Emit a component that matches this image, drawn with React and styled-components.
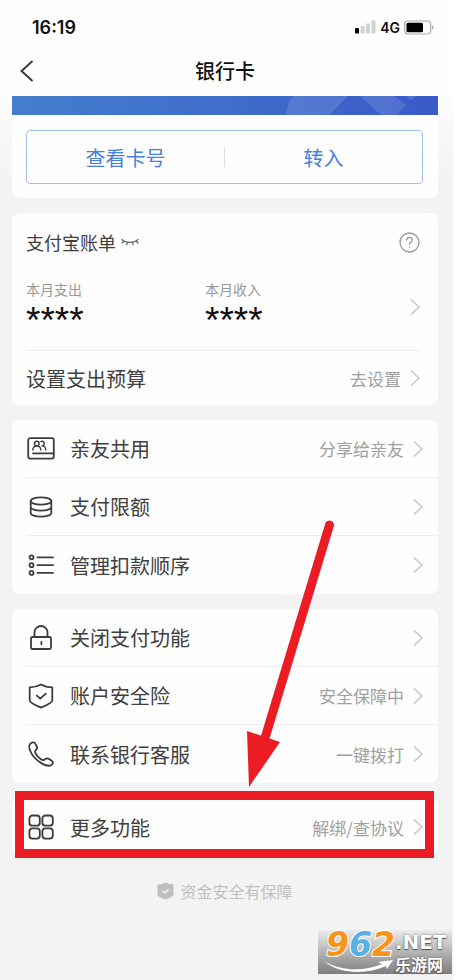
import React from 'react';
import styled, { createGlobalStyle } from 'styled-components';

const GlobalStyle = createGlobalStyle`
  * { box-sizing: border-box; }
  body {
    margin: 0;
    background: #fff;
    color: #404040;
    font-family: 'Noto Sans CJK SC', 'Noto Sans', sans-serif;
    font-weight: 400;
  }
  button {
    font: inherit;
    color: inherit;
    background: none;
    border: 0;
    padding: 0;
    margin: 0;
    text-align: left;
    cursor: pointer;
  }
  svg { display: block; }
`;

const Screen = styled.div`
  display: flex;
  flex-direction: column;
  min-height: 100vh;
  padding-right: 4px;
`;

const Header = styled.header`
  padding: 0 15px 8px 12px;
  background: #fefefe;
`;

const StatusBar = styled.div`
  display: flex;
  align-items: center;
  justify-content: space-between;
  height: 54px;
  padding: 0 4px 0 20px;
  color: #111;
  font-family: Inter, sans-serif;
`;

const Clock = styled.time`
  font-size: 18px;
  font-weight: 600;
`;

const Signals = styled.div`
  display: flex;
  align-items: center;
  gap: 4px;
  font-size: 14px;
  font-weight: 600;
`;

const NavBar = styled.nav`
  display: grid;
  grid-template-columns: 1fr auto 1fr;
  align-items: center;
  height: 34px;
`;

const BackButton = styled.button`
  justify-self: start;
  padding: 4px 8px;
`;

const Title = styled.h1`
  margin: 0;
  font-size: 20px;
  line-height: 28px;
  font-weight: 500;
  color: #111;
`;

const Content = styled.main`
  position: relative;
  flex: 1;
  display: flex;
  flex-direction: column;
  gap: 15px;
  padding: 0 15px 6px 12px;
  background: #f3f3f3 linear-gradient(#fcfcfc, #f3f3f3) top / 100% 90px no-repeat;
`;

const Card = styled.section`
  position: relative;
  background: #fefefe;
  border-radius: ${(p) => (p.$flatTop ? '0 0 8px 8px' : '8px')};
`;

const CardBanner = styled.div`
  height: 19px;
  overflow: hidden;
  display: flex;
  justify-content: flex-end;
  background: linear-gradient(90deg, #447ecd, #3f6ecb 50%, #3a5ac9);
`;

const ActionGroup = styled.div`
  display: grid;
  grid-template-columns: 1fr 1px 1fr;
  align-items: center;
  height: 54px;
  margin: 15px 15px 0 14px;
  border: 1px solid #a3c0ea;
  border-radius: 4px;
`;

const CardActions = styled.div`
  padding-bottom: 14px;
  display: flow-root;
`;

const ActionButton = styled.button`
  height: 52px;
  text-align: center;
  font-size: 20px;
  color: #4680da;
`;

const ActionDivider = styled.span`
  height: 20px;
  background: #d5dfef;
`;

const BillCard = styled(Card)`
  padding: 0 18px 0 14px;
`;

const BillHeader = styled.div`
  display: flex;
  align-items: center;
  justify-content: space-between;
  height: 58px;
`;

const BillTitle = styled.h2`
  display: flex;
  align-items: center;
  gap: 4px;
  margin: 0;
  font-size: 18px;
  font-weight: 400;
`;

const BillSummary = styled.button`
  display: grid;
  grid-template-columns: 179px 1fr auto;
  align-items: center;
  width: 100%;
  padding: 8px 0 16px;
  border-bottom: 1px solid #ededed;
`;

const Amount = styled.span`
  display: flex;
  flex-direction: column;
`;

const AmountLabel = styled.span`
  font-size: 14px;
  line-height: 20px;
  color: #999;
`;

const AmountValue = styled.span`
  height: 35px;
  padding-top: 5px;
  font-family: 'Liberation Sans', sans-serif;
  font-size: 37px;
  line-height: 34px;
  color: #111;
`;

const Row = styled.button`
  display: flex;
  align-items: center;
  width: 100%;
  height: 58px;
  padding-right: ${(p) => (p.$inset ? '0' : '15px')};
  font-size: 20px;
  border-bottom: ${(p) => (p.$last ? '0' : '1px solid #ededed')};
`;

const BudgetRow = styled(Row)`
  height: 54px;
`;

const RowList = styled.div`
  padding-left: 14px;
`;

const RowIcon = styled.span`
  width: 30px;
  margin-right: 14px;
`;

const RowLabel = styled.span`
  flex: 1;
`;

const RowNote = styled.span`
  margin-right: 9px;
  font-size: 17px;
  color: #a0a0a0;
`;

const Highlight = styled.div`
  position: absolute;
  inset: -7px 4px -2px 3px;
  border: 9px solid #ec1c24;
  pointer-events: none;
`;

const Arrow = styled.svg`
  position: absolute;
  right: 103px;
  bottom: 68px;
  pointer-events: none;
`;

const Safety = styled.p`
  display: flex;
  align-items: center;
  justify-content: center;
  gap: 6px;
  margin: 8px 0 0;
  font-size: 16px;
  line-height: 24px;
  color: #bfbfbf;
`;

const SiteBadge = styled.footer`
  display: grid;
  grid-template-columns: 69px auto;
  align-self: flex-end;
  position: relative;
  width: 134px;
  height: 44px;
  margin: auto -14px 0 0;
  padding-left: 8px;
  background: linear-gradient(#ececec, #7e7e7e);
  font-family: 'DejaVu Sans', sans-serif;
  font-weight: 700;
  color: #fff;
`;

const BadgeNumber = styled.span`
  font-size: 33px;
  line-height: 30px;
  font-style: oblique;
  color: #f7941d;
  paint-order: stroke fill;
  -webkit-text-stroke: 2px #fff;
`;

const BadgeBlue = styled.span`
  color: #56b0e6;
`;

const BadgeName = styled.span`
  display: flex;
  flex-direction: column;
  text-shadow: 0 0 2px #555, 0 1px 1px #555;
`;

const BadgeDomain = styled.span`
  font-size: 20px;
  line-height: 24px;
`;

const BadgeChinese = styled.span`
  font-family: 'Noto Sans CJK SC', sans-serif;
  font-size: 16px;
  line-height: 20px;
`;

const Swoosh = styled.svg`
  position: absolute;
  left: 6px;
  bottom: 1px;
`;

const Chevron = () => (
  <svg width="10" height="18" viewBox="0 0 10 18" fill="none" stroke="#c4c4c4" strokeWidth="1.4" aria-hidden="true">
    <path d="M1 1.5 9 9 1 16.5" />
  </svg>
);

const Icon = ({ children }) => (
  <svg width="30" height="30" viewBox="0 0 30 30" fill="none" stroke="#3c3c3c" strokeWidth="1.8" strokeLinecap="round" strokeLinejoin="round" aria-hidden="true">
    {children}
  </svg>
);

const icons = {
  family: (
    <Icon>
      <rect x="2.2" y="4.2" width="25.6" height="20.4" rx="2" />
      <path d="M7 19.3h20.5" />
      <g strokeWidth="1.4">
        <circle cx="10.8" cy="9.6" r="2.3" />
        <path d="M6.8 16c.1-2.4 1.5-4 4-4s3.9 1.6 4 4" />
        <path d="M14.9 7.6a2.3 2.3 0 1 1 1 4.3c2.4 0 3.7 1.6 3.9 4.1" />
      </g>
    </Icon>
  ),
  limit: (
    <Icon>
      <ellipse cx="15" cy="9" rx="10.3" ry="3.7" />
      <path d="M4.7 9v12c0 2 4.6 3.7 10.3 3.7s10.3-1.7 10.3-3.7V9M4.7 15c0 2 4.6 3.7 10.3 3.7s10.3-1.7 10.3-3.7" />
    </Icon>
  ),
  order: (
    <Icon>
      <circle cx="5.5" cy="7.3" r="2" />
      <circle cx="5.5" cy="15.2" r="2" />
      <circle cx="5.5" cy="22.9" r="2" />
      <path d="M11.5 7.3H27M11.5 15.2H27M11.5 22.9H27" />
    </Icon>
  ),
  lock: (
    <Icon>
      <rect x="5" y="14" width="20" height="12" rx="1.5" />
      <path d="M8.5 14V9.5a6.5 6.5 0 0 1 13 0V14M15.4 18.8v2.5" />
    </Icon>
  ),
  shield: (
    <Icon>
      <path d="M15 3.5c3.2 1.9 7 2.8 11.3 2.9v13c0 2.4-6.3 5-11.3 7.2-5-2.2-11.3-4.8-11.3-7.2v-13C8 6.3 11.8 5.4 15 3.5Z" />
      <path d="m10.8 14.7 3.4 3 5.6-5" />
    </Icon>
  ),
  phone: (
    <Icon>
      <path d="M4.2 4.9c1.2-1.4 3.3-2.2 4.4-1 1 1.1 2.2 3.4 2.5 4.8.3 1.7-2.5 2.7-2.1 4.2.8 3.1 4.9 7.2 7.9 8.2 1.6.5 2.5-2 4.3-1.7 1.5.3 3.9 1.7 5.2 2.9 1.2 1.2.3 2.8-1.2 3.8-2.3 1.3-5.7.4-9.1-1.5C10 21.3 6 16.6 4 11.3c-1-2.6-1.2-4.8.2-6.4Z" />
    </Icon>
  ),
  more: (
    <Icon>
      <rect x="3.4" y="3.5" width="10.4" height="10.2" rx="3" />
      <rect x="16.4" y="3.5" width="10.4" height="10.2" rx="3" />
      <rect x="3.4" y="16.4" width="10.4" height="10.2" rx="3" />
      <rect x="16.4" y="16.4" width="10.4" height="10.2" rx="3" />
    </Icon>
  ),
};

const sharing = [
  { icon: 'family', label: '亲友共用', note: '分享给亲友' },
  { icon: 'limit', label: '支付限额' },
  { icon: 'order', label: '管理扣款顺序' },
];

const security = [
  { icon: 'lock', label: '关闭支付功能' },
  { icon: 'shield', label: '账户安全险', note: '安全保障中' },
  { icon: 'phone', label: '联系银行客服', note: '一键拨打' },
];

const more = [{ icon: 'more', label: '更多功能', note: '解绑/查协议' }];

const Rows = ({ items }) => (
  <RowList>
    {items.map(({ icon, label, note }, i) => (
      <Row key={label} type="button" $last={i === items.length - 1}>
        <RowIcon>{icons[icon]}</RowIcon>
        <RowLabel>{label}</RowLabel>
        {note && <RowNote>{note}</RowNote>}
        <Chevron />
      </Row>
    ))}
  </RowList>
);

export default function App() {
  return (
    <Screen>
      <GlobalStyle />
      <Header>
        <StatusBar>
          <Clock>16:19</Clock>
          <Signals>
            <svg width="21" height="14" viewBox="0 0 21 14" fill="#d2d2d2" aria-hidden="true">
              <rect x="0" y="8" width="4" height="5.5" rx="1" fill="#000" />
              <rect x="5.6" y="6" width="4" height="7.5" rx="1" />
              <rect x="11" y="3.5" width="4" height="10" rx="1" />
              <rect x="16.5" y="0.5" width="4" height="13" rx="1" />
            </svg>
            <span>4G</span>
            <svg width="30" height="15" viewBox="0 0 30 15" aria-hidden="true">
              <rect x="0.7" y="1" width="26" height="13" rx="3.5" fill="none" stroke="#aaa" strokeWidth="1.2" />
              <rect x="2.5" y="2.8" width="16.5" height="9.5" rx="1.5" />
              <path d="M28 5.5c2 .6 2 3.4 0 4Z" fill="#aaa" />
            </svg>
          </Signals>
        </StatusBar>
        <NavBar>
          <BackButton type="button" aria-label="返回">
            <svg width="14" height="22" viewBox="0 0 14 22" fill="none" stroke="#333" strokeWidth="1.8" aria-hidden="true">
              <path d="M12.5 1 1.5 11l11 10" />
            </svg>
          </BackButton>
          <Title>银行卡</Title>
        </NavBar>
      </Header>

      <Content>
        <Card $flatTop>
          <CardBanner>
            <svg width="152" height="19" viewBox="0 0 152 19" fill="#fff" fillOpacity=".12" aria-hidden="true">
              <path d="M0 19C1 11 3 5 7 0h55L43 19Z" />
              <path d="M74 0h34l12 9-10 10H95ZM119 0h12l-6 4Z" />
            </svg>
          </CardBanner>
          <CardActions>
            <ActionGroup>
              <ActionButton type="button">查看卡号</ActionButton>
              <ActionDivider />
              <ActionButton type="button">转入</ActionButton>
            </ActionGroup>
          </CardActions>
        </Card>

        <BillCard>
          <BillHeader>
            <BillTitle>
              支付宝账单
              <button type="button" aria-label="显示金额">
                <svg width="20" height="10" viewBox="0 0 20 10" fill="none" stroke="#666" strokeWidth="1.2" strokeLinecap="round" aria-hidden="true">
                  <path d="M2 2.5c3.5 3.8 12.5 3.8 16 0M3.9 4.2 2 6M7.5 5.3l-.8 2.5M12.5 5.3l.8 2.5M16.1 4.2 18 6" />
                </svg>
              </button>
            </BillTitle>
            <button type="button" aria-label="帮助">
              <svg width="21" height="21" viewBox="0 0 21 21" fill="none" stroke="#999" strokeWidth="1.3" strokeLinecap="round" aria-hidden="true">
                <circle cx="10.5" cy="10.5" r="9.5" />
                <path d="M7.7 8c.1-1.7 1.2-2.6 2.8-2.6s2.8 1 2.8 2.5c0 2-2.8 2-2.8 4.3M10.5 14.9v.2" />
              </svg>
            </button>
          </BillHeader>
          <BillSummary type="button">
            <Amount>
              <AmountLabel>本月支出</AmountLabel>
              <AmountValue>****</AmountValue>
            </Amount>
            <Amount>
              <AmountLabel>本月收入</AmountLabel>
              <AmountValue>****</AmountValue>
            </Amount>
            <Chevron />
          </BillSummary>
          <BudgetRow type="button" $inset $last>
            <RowLabel>设置支出预算</RowLabel>
            <RowNote>去设置</RowNote>
            <Chevron />
          </BudgetRow>
        </BillCard>

        <Card>
          <Rows items={sharing} />
        </Card>
        <Card>
          <Rows items={security} />
        </Card>
        <Card>
          <Rows items={more} />
          <Highlight />
          <Arrow width="90" height="270" viewBox="0 0 90 270" fill="#ec1c24" aria-hidden="true">
            <path d="M84.500 7 20 220" stroke="#ec1c24" strokeWidth="9" strokeLinecap="round" />
            <path d="M2 213l33 11L4 269Z" />
          </Arrow>
        </Card>

        <Safety>
          <svg width="17" height="18" viewBox="0 0 17 18" aria-hidden="true">
            <path d="M8.5.5c2.3 1.3 5 1.9 8 2v10.2c0 1.7-4.5 3.5-8 4.9-3.5-1.4-8-3.2-8-4.9V2.5c3-.1 5.7-.7 8-2Z" fill="#bfbfbf" />
            <path d="m5.3 8.8 2.5 2.3 4-3.7" fill="none" stroke="#f3f3f3" strokeWidth="1.5" />
          </svg>
          资金安全有保障
        </Safety>

        <SiteBadge>
          <BadgeNumber>9<BadgeBlue>6</BadgeBlue>2</BadgeNumber>
          <BadgeName>
            <BadgeDomain>.NET</BadgeDomain>
            <BadgeChinese lang="zh">乐游网</BadgeChinese>
          </BadgeName>
          <Swoosh width="70" height="13" viewBox="0 0 70 13" fill="#fff" aria-hidden="true">
            <path d="M0 1c18 11 42 10 58 3l-4-2 15-2-6 9-1-3C42 15 14 14 0 1Z" />
          </Swoosh>
        </SiteBadge>
      </Content>
    </Screen>
  );
}
